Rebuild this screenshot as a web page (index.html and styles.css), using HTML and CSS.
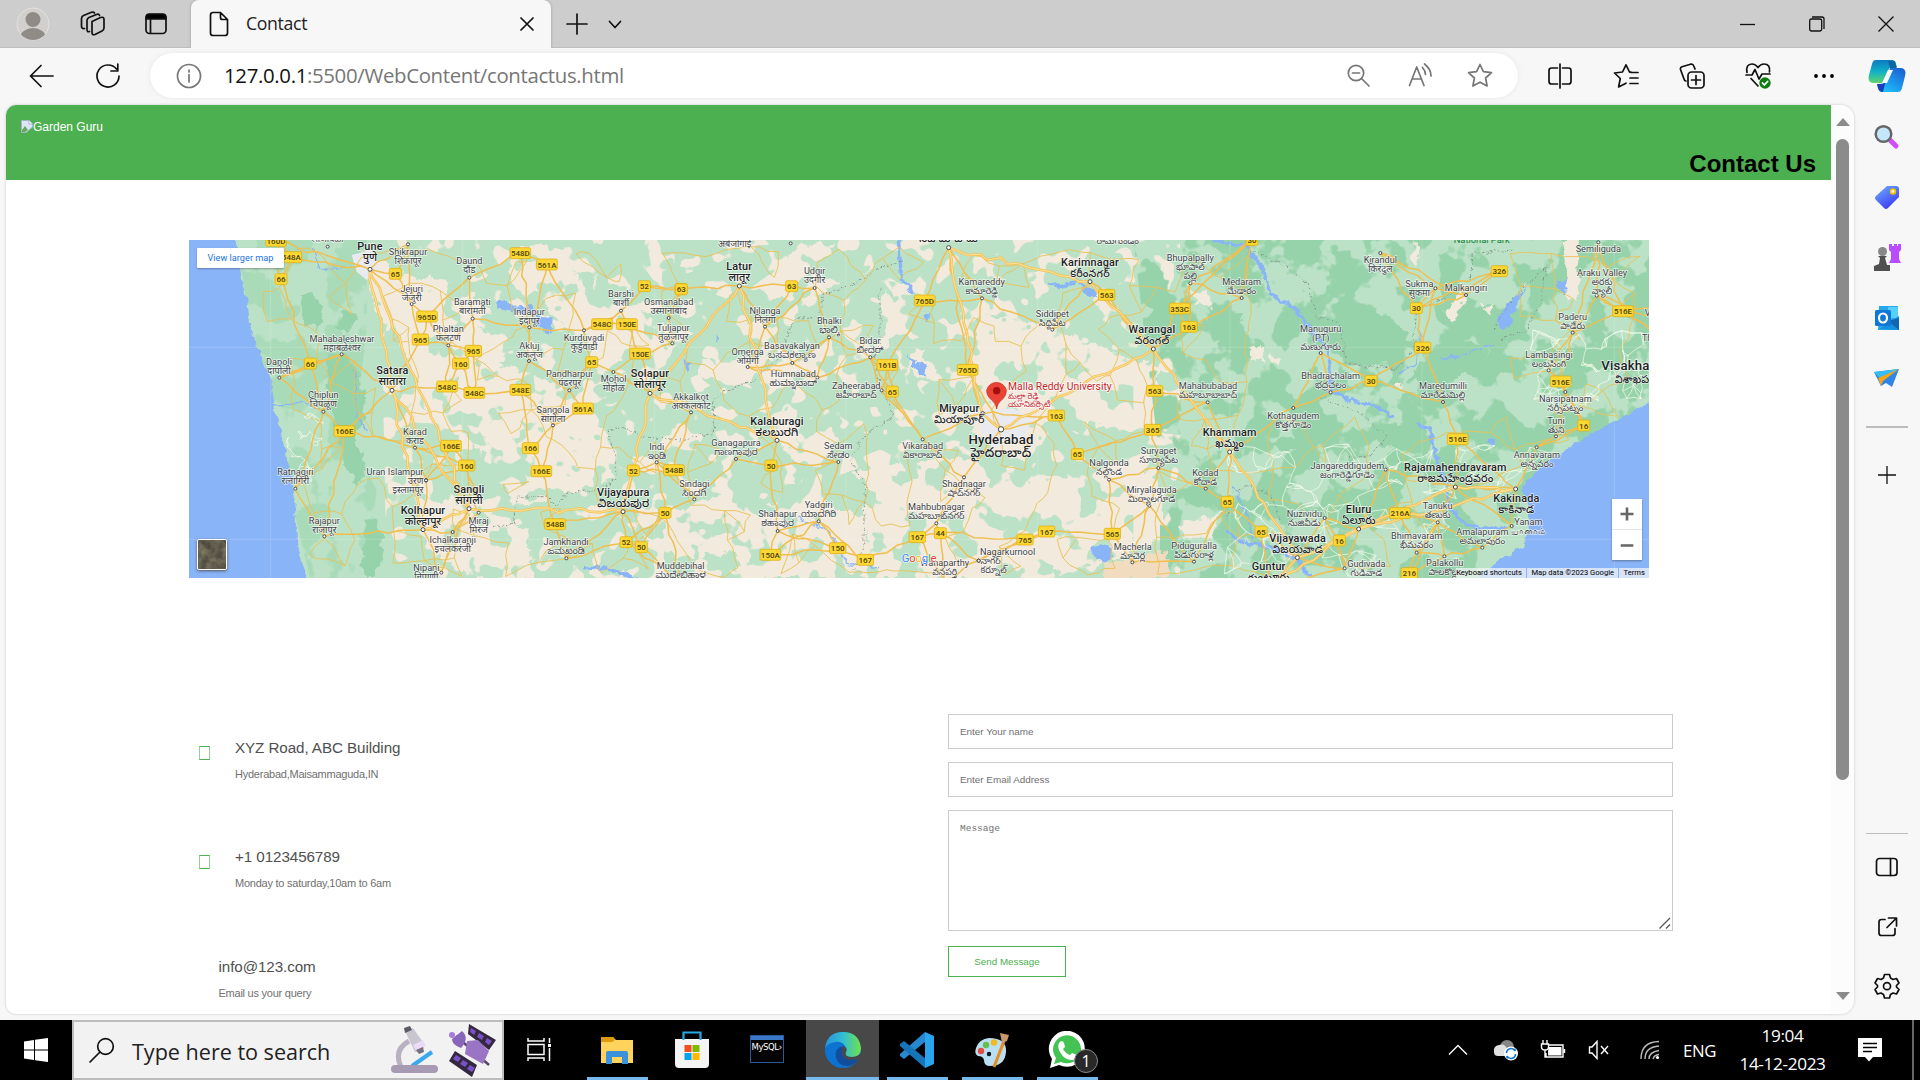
FILE: index.html
```html
<!DOCTYPE html>
<html lang="en">
<head>
<meta charset="utf-8">
<title>Contact</title>
<link rel="stylesheet" href="styles.css">
</head>
<body>
<div class="desktop">
  <div class="titlebar">
    <div class="tab-tools">
      <svg class="avatar" width="34" height="34" viewBox="0 0 34 34"><defs><clipPath id="av"><circle cx="17" cy="17" r="16"/></clipPath></defs><circle cx="17" cy="17" r="16" fill="#d2d0cd" stroke="#e4e2de"/><g clip-path="url(#av)" fill="#8f8c88"><circle cx="17" cy="12.500" r="7.500"/><ellipse cx="17" cy="31" rx="13" ry="10"/></g></svg>
      <svg class="ic workspaces" width="26" height="26" viewBox="0 0 26 26"><path d="M12 10.500 20.500 6.500Q24 5.500 24 8.500V17Q24 19 22 20L15 23.500Q12 24.500 12 21.500Z"/><path d="M9.500 20.500Q7 21.500 7 18.500V9.500Q7 7.500 9 6.500L16.500 3.500Q19 2.500 19.500 4.500M4.500 17.500Q1.500 18 1.500 15V7.500Q1.500 5.500 3.500 4.500L11.500 1.300Q13.500 .8 14.500 2"/></svg>
      <svg class="ic" width="22" height="22" viewBox="0 0 22 22"><rect x="1" y="1.500" width="20" height="19" rx="3.500"/><path d="M1 4.500Q1 1 4.500 1H17.500Q21 1 21 4.500V6H1Z" fill="#000"/><path d="M5.500 6V20"/></svg>
    </div>
    <div class="tab">
      <svg class="ic" width="20" height="26" viewBox="0 0 20 26"><path d="M4 1.500H11.500L18.500 8.500V22Q18.500 24.500 16 24.500H4Q1.500 24.500 1.500 22V4Q1.500 1.500 4 1.500ZM11.500 1.500V6.500Q11.500 8.500 13.500 8.500H18.500"/></svg>
      <span class="tab-name">Contact</span>
      <svg class="ic" width="14" height="14" viewBox="0 0 14 14"><path d="M1 1 13 13M13 1 1 13"/></svg>
    </div>
    <div class="tab-add">
      <svg class="ic" width="22" height="22" viewBox="0 0 22 22"><path d="M11 1V21M1 11H21"/></svg>
      <svg class="ic" width="14" height="9" viewBox="0 0 14 9"><path d="M1.500 1.500 7 7.500 12.500 1.500"/></svg>
    </div>
    <div class="window-buttons">
      <svg class="thin" width="16" height="16" viewBox="0 0 16 16"><path d="M0 8.500H15"/></svg>
      <svg class="thin" width="16" height="16" viewBox="0 0 16 16"><rect x=".7" y="3" width="12" height="12" rx="1.800"/><path d="M3 1H13Q15 1 15 3V13"/></svg>
      <svg class="thin" width="16" height="16" viewBox="0 0 16 16"><path d="M.5.500 15.500 15.500M15.500.500.500 15.500"/></svg>
    </div>
  </div>

  <div class="toolbar">
    <svg class="ic back" width="26" height="24" viewBox="0 0 26 24"><path d="M24 12H1.500M12 1.500 1.500 12 12 22.500"/></svg>
    <svg class="ic reload" width="26" height="26" viewBox="0 0 26 26"><path d="M24 13A11 11 0 1 1 21.500 6M22.800 1V8H16"/></svg>
    <div class="address">
      <svg class="ic gray" width="26" height="26" viewBox="0 0 26 26"><circle cx="13" cy="13" r="11.500"/><path d="M13 11.500V19M13 7V9"/></svg>
      <div class="url"><b>127.0.0.1</b>:5500/WebContent/contactus.html</div>
      <svg class="ic gray" width="23" height="23" viewBox="0 0 23 23"><circle cx="9" cy="9" r="7.700"/><path d="M14.500 14.500 22 22M5.500 9H12.500"/></svg>
      <svg class="ic gray" width="25" height="25" viewBox="0 0 25 25"><path d="M1.500 22.500 8.700 4 16 22.500M4 16H13.500M14.500 4.500Q17.500 8 17.500 11.500M16.500 1Q23 6 23 13"/></svg>
      <svg class="ic gray" width="26" height="25" viewBox="0 0 26 25"><path d="M13 1.500 16.400 8.600 24.500 9.700 18.600 15 20.100 23 13 19.200 5.900 23 7.400 15 1.500 9.700 9.600 8.600Z"/></svg>
    </div>
    <div class="toolbar-actions">
      <svg class="ic" width="26" height="26" viewBox="0 0 26 26"><path d="M10.500 5H4.500Q2 5 2 7.500V18.500Q2 21 4.500 21H10.500M15.500 5H21.500Q24 5 24 7.500V18.500Q24 21 21.500 21H15.500M13 1V25"/></svg>
      <svg class="ic" width="26" height="26" viewBox="0 0 26 26"><path d="M16.500 9 13 1.800 9.500 9 1.500 10 7.300 15.500 5.600 24 13 20.200M18 9.500H25M17 15H25M17 20.500H25M16.500 9H18"/></svg>
      <svg class="ic" width="26" height="26" viewBox="0 0 26 26"><rect x="9" y="9" width="16" height="16" rx="3.500"/><path d="M17 12.500V21.500M12.500 17H21.500M7 18Q5.500 18 5 16L1.500 6.500Q1 4.500 3 3.700L11.500 1.200Q14 .6 14.800 3L16 6"/></svg>
      <svg class="ic" width="26" height="28" viewBox="0 0 26 28"><path d="M2 10.500Q.5 2 7 2 10.500 2 13 5.500 15.500 2 19 2 25.500 2 24.500 10M1 13H7L10 7.500 14 17 17 12H25M6 16.500 13 24"/><circle cx="20" cy="21" r="5.700" fill="#107c10" stroke="none"/><path d="M17.500 21 19.300 23 22.700 19.300" stroke="#fff"/></svg>
      <svg width="26" height="26" viewBox="0 0 26 26"><circle cx="5" cy="13" r="1.900"/><circle cx="13" cy="13" r="1.900"/><circle cx="21" cy="13" r="1.900"/></svg>
    </div>
    <svg class="copilot" width="38" height="36" viewBox="0 0 38 36"><defs><linearGradient id="c1" x2="0" y2="1"><stop stop-color="#0d7ac0"/><stop offset=".5" stop-color="#11b0c8"/><stop offset="1" stop-color="#5fd56b"/></linearGradient><linearGradient id="c2" x1="1" x2=".2" y2="1"><stop stop-color="#1858d0"/><stop offset="1" stop-color="#20c4ff"/></linearGradient></defs><path d="M8 2H24Q27 2 28 6L29 9H25Q21 9 20 13L16 25H6Q-1 25 1 17L4 6Q5 2 8 2Z" fill="url(#c1)"/><path d="M30 34H14Q11 34 10 30L9 26H13Q17 26 18 22L22 10H32Q39 10 37 18L34 30Q33 34 30 34Z" fill="url(#c2)"/><path d="M9 26H13Q17 26 18 22L15 34Q11 34 10 30Z" fill="#173fc0"/><path d="M20 3 27 3Q28 9 29 10L22 10Z" fill="#0767a5"/><path d="M20 12H25L19 25H14Z" fill="#f7fbff"/></svg>
  </div>

  <div class="workarea">
    <div class="viewport">
      <div class="site">
        <header class="site-header">
          <div class="logo"><svg width="12" height="13" viewBox="0 0 12 13"><path d="M.5.500H8L11.500 4V7L5 12.500H.5Z" fill="#dbe5f7" stroke="#a9b4c4"/><path d="M8 .5V4H11.500" fill="#fff" stroke="#a9b4c4"/><path d="M1 10 4 6 7 10 4 12H1Z" fill="#66a95b"/></svg>Garden Guru</div>
          <h1>Contact Us</h1>
        </header>
        <section class="map">
          <svg class="map-canvas" viewBox="27 30 4380 1014" preserveAspectRatio="none">
            <defs>
              <filter id="rough" color-interpolation-filters="sRGB" x="-5%" y="-5%" width="110%" height="110%"><feTurbulence type="fractalNoise" baseFrequency=".03" numOctaves="3" seed="4"/><feDisplacementMap in="SourceGraphic" scale="42" xChannelSelector="R" yChannelSelector="G"/></filter>
              <filter id="ripple" color-interpolation-filters="sRGB" x="-5%" y="-5%" width="110%" height="110%"><feTurbulence type="fractalNoise" baseFrequency=".045" numOctaves="3" seed="4"/><feDisplacementMap in="SourceGraphic" scale="22" xChannelSelector="R" yChannelSelector="G"/></filter>
              <filter id="patches" color-interpolation-filters="sRGB" x="0" y="0" width="100%" height="100%"><feTurbulence type="fractalNoise" baseFrequency=".015" numOctaves="2" seed="11"/><feColorMatrix values="0 0 0 0 .949  0 0 0 0 .918  0 0 0 0 .863  30 0 0 0 -17"/><feComposite in2="SourceGraphic" operator="in"/></filter>
              <filter id="groves" color-interpolation-filters="sRGB" x="0" y="0" width="100%" height="100%"><feTurbulence type="fractalNoise" baseFrequency=".013" numOctaves="3" seed="23"/><feColorMatrix values="0 0 0 0 .733  0 0 0 0 .886  0 0 0 0 .776  0 30 0 0 -17.200"/><feComposite in2="SourceGraphic" operator="in"/></filter>
              <filter id="woods" color-interpolation-filters="sRGB" x="0" y="0" width="100%" height="100%"><feTurbulence type="fractalNoise" baseFrequency=".009" numOctaves="4" seed="7"/><feColorMatrix values="0 0 0 0 .592  0 0 0 0 .827  0 0 0 0 .667  0 0 20 0 -9.600"/><feComposite in2="SourceGraphic" operator="in"/></filter>
            </defs>
            <rect x="27" y="30" width="4380" height="1014" fill="#bbe2c6"/>
            <path d="M600 30H3000V1044H620Z" filter="url(#patches)"/>
            <g fill="#f2eadc" filter="url(#rough)">
              <path d="M590 130 820 150 930 230 900 300 1010 330 960 400 1070 440 1220 520 1290 620 1300 750 1180 790 1000 830 960 740 880 640 740 560 700 420 650 330Z"/>
              <path d="M540 60 640 110 700 240 620 300 560 150Z"/>
              <path d="M1000 60 1120 40 1180 100 1230 240 1210 330 1120 260 1070 180 980 150Z"/>
              <path d="M1200 220 1440 220 1480 330 1280 420 1180 380Z"/>
              <path d="M700 800 900 830 1040 900 1060 1044 880 1044 750 960Z"/>
              <path d="M1310 860 1500 840 1600 800 1750 850 1900 820 2060 860 2060 1044 1700 1044 1660 960 1500 990Z"/>
              <path d="M2020 720 2240 690 2400 680 2560 760 2850 690 2960 790 2940 930 2760 1000 2560 1044 2100 1044 2060 900Z"/>
              <path d="M2340 520 2400 250 2560 280 2700 330 2930 410 2960 600 2800 600 2620 540 2540 690 2400 660Z"/>
              <path d="M1870 40 1960 50 1980 160 1820 210 1720 180Z"/><path d="M1560 400 1900 380 1940 440 1760 490 1560 440Z"/><path d="M2120 180 2200 320 2300 470 2200 430 2090 280Z"/><path d="M1770 600 1900 560 2000 640 1880 730Z"/>
            </g>
            <path d="M720 30H2860V1044H800Z" filter="url(#groves)"/>
            <path d="M2860 30H4407V520L4020 820 3960 1044H2940V700Z" filter="url(#woods)"/>
            <path d="M170 30H560V300L520 640 590 780 560 1044H390L290 620 200 220Z" filter="url(#woods)" opacity=".45"/>
            <g fill="#97d3aa" filter="url(#rough)">
              <path d="M362 190 400 190 430 250 410 300 370 280Z"/><path d="M480 250 520 240 535 270 500 310 470 300Z"/>
              <path d="M440 380 500 370 540 440 555 560 520 620 560 700 530 770 490 700 470 600 440 500Z"/>
              <path d="M550 860 590 880 610 960 590 1044 550 1044Z"/>
              <path d="M3080 250 3180 250 3200 320 3120 345Z"/><path d="M3350 230 3480 270 3620 250 3690 320 3660 400 3500 410Z"/>
              <path d="M3580 590 3720 570 3760 630 3740 680 3600 650Z"/><path d="M3280 630 3360 610 3370 650 3300 665Z"/><path d="M3780 330 3930 340 3900 420 3780 470 3690 450Z"/>
            </g>
            <g fill="#f2eadc" filter="url(#rough)"><path d="M4150 30 4190 30 4195 210 4160 215Z"/><path d="M3020 165 3080 190 3095 235 3055 220Z"/><path d="M3825 190 3860 200 3815 280 3800 250Z"/><path d="M3905 230 3950 215 3930 260Z"/><path d="M3210 345 3240 340 3250 390 3220 385Z"/><path d="M3270 365 3310 380 3290 410Z"/><path d="M3000 880 3130 850 3090 920 3010 920Z"/><path d="M3700 30 3725 90 3700 120Z"/><path d="M3645 460 3670 455 3660 490Z"/></g>
            <path d="M2775 1000 2960 960 2970 1044H2770Z" fill="#f2dcc0" filter="url(#rough)"/>
            <g fill="#e8eaf0"><path d="M515 75 575 60 600 120 560 150 530 125Z"/><path d="M2410 540 2500 535 2550 560 2530 640 2440 650 2400 600Z"/><path d="M860 810 890 810 895 845 865 845Z"/></g>
            <g fill="#8ab4f8" filter="url(#ripple)">
              <path d="M0 0H162L182 130 200 200 212 290 240 370 272 440 285 540 300 600 320 680 340 760 350 860 355 950 383 1060H0Z"/>
              <path d="M4430 505 4310 570 4220 620 4140 670 4070 720 4025 770 4050 840 4045 900 4030 950 3940 1000 3890 1060H4430Z"/>
              <path d="M945 215 980 210 1000 230 1060 225 1080 260 1115 265 1110 315 1080 290 1060 255 990 245 950 235Z"/>
              <path d="M2180 375 2205 395 2240 400 2235 440 2210 430Z"/><path d="M1510 390 1535 400 1520 430Z"/>
              <path d="M2730 950 2780 940 2800 980 2770 1000 2740 980Z"/><path d="M2700 175 2740 175 2750 205Z"/><path d="M3950 270 3980 220 4040 170 4000 250 3990 290 3960 290Z"/><path d="M4130 150 4160 150 4155 195 4130 170Z"/><path d="M3920 635 3950 620 3940 650Z"/><path d="M2230 255 2250 255 2240 275Z"/><path d="M1610 315 1620 325 1610 335Z"/>
            </g>
            <g class="rivers" filter="url(#ripple)">
              <path d="M3100 30 3200 50 3250 120 3270 190 3350 240 3390 300 3440 350 3450 400 3450 480 3510 510 3590 530 3640 560"/><path d="M3710 580 3750 600 3765 660 3780 720 3800 770 3810 830 3850 880 3900 895 3985 895"/><path d="M3140 900 3180 935 3280 955 3350 985 3390 1044"/><path d="M1210 1010 1300 1020 1370 1050" /><path d="M2155 30 2165 150 2200 190"/><path d="M2600 160 2650 170 2690 150 2740 200"/>
              <path class="stream" d="M520 420 530 560 560 600M400 50 420 120 500 110M280 525 370 520 420 540M1850 860 1940 900 2000 1000 2100 1010M3660 430 3710 400 3720 300M3940 340 3860 370 3780 390M3160 770 3200 850 3220 930"/>
            </g>
            <g class="borders" filter="url(#ripple)"><path d="M940 890 1000 880 1010 800 1100 800 1130 830 1160 790 1240 780 1310 750 1300 660 1280 600 1330 590 1380 620 1500 630 1600 610 1600 510 1640 480 1720 450 1800 380 1840 270 1920 260 1930 190 2010 170 2060 140 2100 110 2160 100"/><path d="M2100 170 2100 320 2080 400 2120 520 2140 560 2060 610 2010 690 2060 770 2050 960 2020 1020"/><path d="M3210 60 3320 110 3380 160 3410 260 3480 280 3500 400 3650 420 3700 360 3710 240 3800 200 3870 150 3880 70 4000 60"/><path d="M3420 500 3540 550 3620 620 3570 680 3500 680"/><path d="M3940 300 4000 200 4100 110 4080 220 4040 300 3960 330"/><path d="M3140 870 3150 790 3200 770 3270 790 3300 870"/></g>
            <g id="lanes"></g><g id="roads"></g>
            <g class="graticule"><path d="M27 352H4407M27 928H4407M272 30V1044M847 30V1044M1423 30V1044M1998 30V1044M2573 30V1044M3150 30V1044M3726 30V1044M4303 30V1044"/></g>
            <g id="shields"></g><g id="towns"></g>
            <path d="M2450 537C2448 510 2420 510 2420 481A30 29 0 0 1 2479 481C2479 510 2452 510 2450 537Z" fill="#ea4335" stroke="#c5221f" stroke-width="2"/><circle cx="2450" cy="482" r="11" fill="#a50e0e"/>
            <g class="google"><text x="2165" y="997"><tspan fill="#4285f4">G</tspan><tspan fill="#ea4335">o</tspan><tspan fill="#fbbc05">o</tspan><tspan fill="#4285f4">g</tspan><tspan fill="#34a853">l</tspan><tspan fill="#ea4335">e</tspan></text></g>
          </svg>
          <a class="larger-map">View larger map</a>
          <div class="satellite"><svg width="28" height="29" viewBox="0 0 28 29"><defs><filter id="soil" color-interpolation-filters="sRGB"><feTurbulence type="fractalNoise" baseFrequency=".12" numOctaves="3" seed="3"/><feColorMatrix values=".35 0 0 0 .2  .33 0 0 0 .19  .25 0 0 0 .17  0 0 0 0 1"/></filter></defs><rect width="28" height="29" filter="url(#soil)"/></svg></div>
          <div class="zoom"><svg width="30" height="30" viewBox="0 0 30 30"><path d="M15 8.500V21.500M8.500 15H21.500"/></svg><svg width="30" height="31" viewBox="0 0 30 31"><path d="M8.500 16H21.500"/></svg></div>
          <div class="attribution"><span>Keyboard shortcuts</span><span>Map data ©2023 Google</span><span>Terms</span></div>
        </section>
        <section class="contact">
          <div class="details">
            <div class="detail"><i class="glyph"></i><div><h5>XYZ Road, ABC Building</h5><p>Hyderabad,Maisammaguda,IN</p></div></div>
            <div class="detail"><i class="glyph"></i><div><h5>+1 0123456789</h5><p>Monday to saturday,10am to 6am</p></div></div>
            <div class="detail detail-plain"><div><h5>info@123.com</h5><p>Email us your query</p></div></div>
          </div>
          <form class="form">
            <input type="text" placeholder="Enter Your name">
            <input type="text" placeholder="Enter Email Address">
            <div class="message"><textarea placeholder="Message"></textarea><svg width="14" height="14" viewBox="0 0 14 14"><path d="M1.500 12.500 12 2M8 12.500 12 8.500"/></svg></div>
            <button type="button">Send Message</button>
          </form>
        </section>
      </div>
      <div class="scrollbar"><i class="up"></i><i class="thumb"></i><i class="down"></i></div>
    </div>

    <aside class="sidebar">
      <svg width="28" height="28" viewBox="0 0 28 28"><defs><linearGradient id="p" x2="1" y2="1"><stop stop-color="#f060ff"/><stop offset="1" stop-color="#9030f0"/></linearGradient></defs><path d="M17.500 17.500 23 23" stroke="#d24bff" stroke-width="5" stroke-linecap="round"/><circle cx="10.500" cy="11" r="7.800" fill="#c4e6fa" stroke="#666" stroke-width="2.500"/></svg>
      <svg width="28" height="28" viewBox="0 0 28 28"><defs><linearGradient id="tg" x2=".6" y2="1"><stop stop-color="#6fb1ff"/><stop offset="1" stop-color="#3c3cf0"/></linearGradient></defs><path d="M14 3H23Q26 3 26 6V14L15 25Q13 27 11 25L3 17Q1 15 3 13Z" fill="url(#tg)"/><circle cx="20" cy="8.500" r="2.300" fill="#fff" stroke="#f5c400" stroke-width="1.800"/></svg>
      <svg width="28" height="30" viewBox="0 0 28 30"><path d="M16 2H19V4H21V2H24V4H25V2H28V8L26 10V17L28 21H16L18 17V10L16 8Z" fill="#b94cff"/><circle cx="9.500" cy="9.500" r="4.500" fill="#888"/><path d="M5 14H14L12 16 14 23H17V29H1V24L6 22 7 16Z" fill="#505050"/></svg>
      <svg width="28" height="28" viewBox="0 0 28 28"><path d="M6 2H25V26H5Z" fill="#28a8ea"/><path d="M15 3H25V14H15Z" fill="#55d0ff"/><path d="M6 25 26 12V26Z" fill="#1490df"/><path d="M15 17 26 26V14Z" fill="#1066b0"/><rect x="2" y="6" width="16" height="16" rx="1.500" fill="#0f78d4"/><ellipse cx="10" cy="14" rx="4" ry="4.500" fill="none" stroke="#fff" stroke-width="2.200"/></svg>
      <svg width="28" height="28" viewBox="0 0 28 28"><path d="M1 8 26 5 19 23 13 19 8 22Z" fill="#3184e8"/><path d="M1 8 26 5 8 15Z" fill="#39bdf5"/><path d="M5 14 26 5 10 17 8 22Z" fill="#f5a614"/></svg>
      <hr>
      <svg class="thin" width="20" height="20" viewBox="0 0 20 20"><path d="M10 1V19M1 10H19"/></svg>
      <hr class="second">
      <svg class="ic" width="24" height="24" viewBox="0 0 24 24"><rect x="1.500" y="3.500" width="20.500" height="17" rx="3"/><path d="M15.500 3.500V20.500"/></svg>
      <svg class="ic" width="22" height="22" viewBox="0 0 22 22"><path d="M9 3.500H5.500Q3 3.500 3 6V17Q3 19.500 5.500 19.500H16.500Q19 19.500 19 17V12.500M12.500 2H20.500V10M20 2.500 11 11.500"/></svg>
      <svg class="ic" width="28" height="28" viewBox="0 0 28 28"><path d="M11.500 2.500H16.500L17.500 6 20 7.500 23.500 6.500 26 11 23.500 13.500V15L26 17.500 23.500 22 20 21 17.500 22.500 16.500 26H11.500L10.500 22.500 8 21 4.500 22 2 17.500 4.500 15V13.500L2 11 4.500 6.500 8 7.500 10.500 6Z" stroke-linejoin="round"/><circle cx="14" cy="14.200" r="3.500"/></svg>
    </aside>
  </div>

  <div class="taskbar">
    <div class="start"><svg width="24" height="24" viewBox="0 0 24 24" fill="#fff"><path d="M0 3.500 10 2V11.500H0ZM11 1.800 24 0V11.500H11ZM0 12.500H10V22L0 20.500ZM11 12.500H24V24L11 22.200Z"/></svg></div>
    <div class="search">
      <svg class="ic" width="26" height="26" viewBox="0 0 26 26"><circle cx="16.500" cy="9.500" r="7.800"/><path d="M11 15 1 25"/></svg>
      <span>Type here to search</span>
      <svg class="scope" width="48" height="48" viewBox="0 0 48 48"><path d="M18 15Q2 24 10 41" fill="none" stroke="#b8b1c2" stroke-width="5"/><path d="M21 40 41 26" stroke="#39a9ee" stroke-width="4"/><path d="M14 5 22 2 34 19 31 25 24 26Z" fill="#c9c5d1"/><path d="M22 19 32 14 35 20 25 25Z" fill="#eadcf8"/><path d="M25 24 32 21 33 26 28 28Z" fill="#77707f"/><path d="M13 2 19 0 21 4 14 7Z" fill="#5c5964"/><rect x="0" y="39" width="47" height="8" rx="4" fill="#a79bb3"/></svg>
      <svg class="sat" width="48" height="54" viewBox="0 0 48 54"><path d="M7 13 40 42" stroke="#594864" stroke-width="2.500"/><path d="M20 1 47 17 40 27 19 11ZM6 28 28 42 23 54 0 38Z" fill="#33283f"/><path d="M22 5 27 8 25 12 21 9ZM30 10 35 13 33 17 28 14ZM38 15 43 18 40 22 36 19ZM7 32 12 35 9 39 4 36ZM14 37 19 40 16 44 11 41ZM21 42 26 45 23 49 18 46Z" fill="#7952c8"/><path d="M18 18 29 17 40 28 34 41 16 31Z" fill="#9a75c5"/><path d="M13 8Q21 15 12 25 3 22 3 16Z" fill="#8866ba"/><circle cx="3" cy="12" r="3" fill="#a779df"/></svg>
    </div>
    <div class="taskview"><svg width="26" height="26" viewBox="0 0 26 26" fill="none" stroke="#fff" stroke-width="1.500"><path d="M2 1V4H18V1M2 24V21H18V24M2 7.500H18V17.500H2ZM23.500 1V6M23.500 11V24"/><path d="M22 8.500H25" stroke-width="3"/></svg></div>
    <div class="apps">
      <div class="app open"><svg width="34" height="30" viewBox="0 0 34 30"><path d="M1 2H13L16 5H33V28H1Z" fill="#ffd35c"/><path d="M1 2H13L15 5 12 7H1Z" fill="#dc9a0c"/><path d="M6 28V18Q6 16 8 16H26Q28 16 28 18V29H22V22H12V29H6Z" fill="#3c92da"/></svg></div>
      <div class="app"><svg width="36" height="38" viewBox="0 0 36 38"><path d="M1 8H35V33Q35 37 31 37H5Q1 37 1 33Z" fill="#f4f4f4"/><path d="M9.500 9V1.500H26.500V9" fill="none" stroke="#27a9e6" stroke-width="2.200"/><path d="M10.500 14H17.500V21H10.500Z" fill="#f25022"/><path d="M18.500 14H25.500V21H18.500Z" fill="#7fba00"/><path d="M10.500 22H17.500V29H10.500Z" fill="#00a4ef"/><path d="M18.500 22H25.500V29H18.500Z" fill="#ffb900"/></svg></div>
      <div class="app"><div class="mysql"><b></b><span>MySQL›</span></div></div>
      <div class="app open active"><svg width="38" height="38" viewBox="0 0 38 38"><defs><linearGradient id="e1"><stop stop-color="#2792d8"/><stop offset=".5" stop-color="#32bdd6"/><stop offset="1" stop-color="#72e248"/></linearGradient></defs><circle cx="19" cy="19" r="18" fill="#0c74d0"/><path d="M1 17Q3 1 19 1 35 1 37 17 37 26 28 26 20 26 21 22 24 20 21 15 18 10 11 11 4 12 1 17Z" fill="url(#e1)"/><path d="M19 15Q10 17 12 27 15 36 25 35 32 33 35 27 23 31 19 25 17 20 19 15Z" fill="#124d9b"/><path d="M19 15Q24 16 22 21 20 26 28 26 34 26 38 21L38 31 34.500 28Q23 31 19 25 17 20 19 15Z" fill="#484848"/></svg></div>
      <div class="app open"><svg width="38" height="38" viewBox="0 0 38 38"><path d="M27 1V11L6 28 2 25V23Z" fill="#2588d0"/><path d="M2 13 6 10 28 28 27 37 2 15Z" fill="#1674b9"/><path d="M27 1 36 5V33L27 37Z" fill="#2ba4ef"/></svg></div>
      <div class="app open"><svg width="38" height="38" viewBox="0 0 38 38"><path d="M16 7Q34 7 33 21 32 35 17 35 11 35 11 29 10 25 5 25 1 23 3 17 6 8 16 7Z" fill="#b9dff2"/><circle cx="8" cy="20" r="3.200" fill="#e34d43"/><circle cx="13" cy="14" r="3.200" fill="#68be4d"/><circle cx="21" cy="11.500" r="3.200" fill="#f5b91c"/><circle cx="16" cy="23" r="2.200" fill="#101820"/><path d="M31 10 21 36" stroke="#e58d20" stroke-width="3"/><path d="M27 2 36 4 34 10 29 12Z" fill="#c89868"/></svg></div>
      <div class="app open"><svg width="38" height="38" viewBox="0 0 38 38"><path d="M2 37 4 28A18 18 0 1 1 11 34Z" fill="#fff"/><path d="M6 33 8 27A14 14 0 1 1 13 31Z" fill="#42c352"/><path d="M11 12Q14 8 16 12L17 16 15 18Q18 23 22 24L24 22 29 24Q30 28 25 29 17 30 12 21 9 16 11 12Z" fill="#fff"/></svg><span class="badge">1</span></div>
    </div>
    <div class="tray">
      <svg width="20" height="12" viewBox="0 0 20 12"><path d="M1 10.500 10 1.500 19 10.500"/></svg>
      <svg width="26" height="22" viewBox="0 0 26 22" style="stroke:none"><circle cx="14" cy="8" r="7" fill="#858585"/><path d="M1 13Q0 7 6 6 12 4 14 10L15 17H5Q1 17 1 13Z" fill="#e0e0e0"/><circle cx="18" cy="14.500" r="7" fill="#fff"/><path d="M13.500 14A4.500 4.500 0 0 1 22 12V9.500M22.500 15A4.500 4.500 0 0 1 14 17V19.500" fill="none" stroke="#1376c8" stroke-width="1.600"/></svg>
      <svg width="26" height="20" viewBox="0 0 26 20"><path d="M8 5H23V17H6V13M24.500 9V13M3 0V4M7 0V4M1.500 4H8.500V7Q8.500 10 5 10 1.500 10 1.500 7ZM5 10V17H6"/><path d="M9 7H21.500V15.500H8V11Z" fill="#fff" stroke="none"/></svg>
      <svg width="22" height="20" viewBox="0 0 22 20"><path d="M1.500 7H4L9 1.500V18.500L4 13H1.500ZM13 6 20 14M20 6 13 14"/></svg>
      <svg width="20" height="20" viewBox="0 0 20 20"><path d="M1 19Q1 2 19 1.500M5 19Q5 7 19 6M9 19Q9 12 19 10.500M13 19Q14 15 19 14.500" stroke="#bbb"/><circle cx="17.500" cy="17.500" r="1.600" fill="#fff" stroke="none"/></svg>
      <span class="lang">ENG</span>
      <div class="clock"><span>19:04</span><span>14-12-2023</span></div>
      <svg class="notes" width="26" height="26" viewBox="0 0 26 26"><path d="M1 1H25V20H16L12 24.500 8 20H1Z" fill="#fff" stroke="none"/><path d="M6 6.500H20M6 10.500H20M6 14.500H15" stroke="#000"/></svg>
      <i class="peek"></i>
    </div>
  </div>
</div>
<script src="map.js"></script>
</body>
</html>
```
FILE: styles.css
```css
* { box-sizing: border-box; }
body { margin: 0; overflow: hidden; background: #f7f7f7; font-family: "Liberation Sans", Arial, sans-serif; }
svg { display: block; flex: none; }
h1, h5, p { margin: 0; }
.ic { fill: none; stroke: #111; stroke-width: 1.7; stroke-linejoin: round; stroke-linecap: round; }
.ic.gray { stroke: #767676; }
.thin { fill: none; stroke: #111; stroke-width: 1.3; }
.desktop { width: 1920px; height: 1080px; display: flex; flex-direction: column; }

.titlebar { height: 48px; background: #cdcdcd; display: flex; align-items: stretch; box-shadow: inset 0 -1px #bdbdbd; }
.tab-tools { width: 191px; display: flex; align-items: center; padding-left: 16px; }
.workspaces { margin: 0 39px 0 30px; }
.tab { width: 360px; background: #f7f7f7; border-radius: 8px 8px 0 0; display: flex; align-items: center; padding: 0 17px 0 18px; box-shadow: 0 0 3px #999; clip-path: inset(0 -4px 0 -4px); }
.tab-name { flex: 1; margin: -2px 0 0 17px; font: 17.7px "Open Sans", sans-serif; letter-spacing: -.35px; color: #222; }
.tab-add { display: flex; align-items: center; gap: 20px; margin-left: 15px; }
.window-buttons { margin-left: auto; display: flex; align-items: center; gap: 53px; padding-right: 26px; }

.toolbar { height: 57px; display: flex; align-items: center; padding: 0 14px 2px 29px; background: #f7f7f7; }
.reload { margin: 0 29px 0 40px; }
.address { width: 1368px; height: 45px; border-radius: 23px; background: #fff; display: flex; align-items: center; padding: 0 25px 0 26px; box-shadow: 0 0 5px #e6e6e6; }
.url { flex: 1; margin: -1px 0 0 22px; font: 20.4px "Open Sans", sans-serif; letter-spacing: -.34px; color: #767676; white-space: nowrap; }
.url b { font-weight: 400; color: #111; }
.address .gray:nth-of-type(3) { margin: 0 34px 0 38px; }
.toolbar-actions { display: flex; align-items: center; gap: 40px; margin-left: 29px; }
.copilot { margin-left: auto; }

.workarea { height: 915px; display: flex; padding: 0 0 6px 6px; }
.viewport { width: 1848px; height: 909px; display: flex; border-radius: 10px 14px 14px 10px; overflow: hidden; background: #fff; box-shadow: 0 0 3px #c4c4c4; }
.site { width: 1825px; }
.site-header { height: 75px; background: #4caf50; padding: 15px 15px 0; display: flex; justify-content: space-between; }
.logo { display: flex; align-items: flex-start; font-size: 12px; line-height: 14px; color: #fff; }
h1 { font-size: 24px; line-height: 28px; margin-top: 30px; color: #000; }

.map { position: relative; width: 1460px; height: 338px; margin: 60px 0 0 183px; overflow: hidden; }
.map-canvas { width: 1460px; height: 338px; }
.map text { font-family: Roboto, "Noto Sans", "Noto Sans Devanagari", "Noto Sans Telugu", "Noto Sans Kannada", sans-serif; text-anchor: middle; }
.town { font-size: 27.5px; fill: #3f4348; stroke: #fff; stroke-width: 4px; stroke-opacity: .75; paint-order: stroke; }
.city { font-size: 32.5px; font-weight: 500; letter-spacing: .5px; fill: #202124; stroke: #fff; stroke-width: 4px; stroke-opacity: .75; paint-order: stroke; }
.metro { font-size: 39.5px; }
.place { font-size: 31px; fill: #c5221f; stroke: #fff; stroke-width: 4px; paint-order: stroke; }
.place-local { font-size: 25px; }
.park { font-size: 28px; fill: #188038; }
.dot { fill: #fff; stroke: #45494e; stroke-width: 3px; }
.shield rect { fill: #fdd835; stroke: #e0a800; stroke-width: 2px; }
.shield text { font-size: 24px; font-weight: 500; fill: #4b4212; }
.road { fill: none; stroke: #f0bf50; stroke-width: 4.5px; }
.major { stroke: #f5c35a; stroke-width: 8px; }
.major-core { stroke: #fde29a; stroke-width: 3px; }
.lane { fill: none; stroke: #fffef2; stroke-width: 2.5px; opacity: .75; }
.country { fill: none; stroke: #e8c257; stroke-width: 3px; opacity: .9; }
.rivers path { fill: none; stroke: #8ab4f8; stroke-width: 10px; stroke-linejoin: round; }
.rivers .stream { stroke-width: 4px; }
.borders path { fill: none; stroke: #85958d; stroke-width: 3px; stroke-dasharray: 6 6; }
.graticule path { fill: none; stroke: #fff; stroke-width: 1.5px; opacity: .3; }
.map .google text { text-anchor: start; font-size: 34px; letter-spacing: -.6px; stroke: #fff; stroke-width: 3px; paint-order: stroke; }
.larger-map { position: absolute; left: 8px; top: 8px; width: 87px; height: 20px; background: #fff; border-radius: 1px; box-shadow: 0 1px 2px rgba(0,0,0,.3); font: 9.2px/20px Roboto, sans-serif; color: #1a73e8; text-align: center; }
.satellite { position: absolute; left: 8px; top: 299px; width: 30px; height: 31px; border: 1px solid #fff; border-radius: 2px; overflow: hidden; box-shadow: 0 1px 3px #555; }
.zoom { position: absolute; right: 7px; top: 259px; width: 30px; height: 61px; background: #fff; box-shadow: 0 1px 2px rgba(0,0,0,.35); }
.zoom svg { fill: none; stroke: #666; stroke-width: 2.6; }
.zoom svg + svg { border-top: 1px solid #e6e6e6; }
.attribution { position: absolute; right: 0; bottom: 0; height: 10px; display: flex; gap: 1px; font: 7.6px/10px Roboto, sans-serif; color: #000; }
.attribution span { background: rgba(245,245,245,.72); padding: 0 4.2px; white-space: nowrap; }
.attribution span:first-child { padding-left: 0; }

.contact { display: flex; padding: 136px 0 0 189px; height: 436px; }
.details { width: 753px; padding-top: 24px; }
.detail { height: 109.3px; display: flex; }
.detail-plain { padding-left: 24px; margin-left: -4px; }
.detail-plain > div { margin-left: 3.5px; }
.detail h5 { font-size: 15.2px; line-height: 20px; letter-spacing: -.08px; font-weight: 400; color: #505050; margin-bottom: 8px; }
.detail p { font-size: 11px; line-height: 16px; letter-spacing: -.24px; color: #707070; }
.detail:not(.detail-plain) { padding-left: 4px; }
.glyph { width: 11px; height: 14px; border: 1px solid #4caf50; border-color: #4caf50 #8fd096; margin: 8px 25px 0 0; }
.form { width: 725px; display: flex; flex-direction: column; align-items: flex-start; }
.form input, .form textarea { width: 725px; border: 1px solid #ccc; outline: none; background: #fff; border-radius: 0; display: block; }
.form input { height: 35px; padding: 0 11px; margin-bottom: 13px; font: 9.9px "Liberation Sans", sans-serif; }
.form ::placeholder { color: #707070; opacity: 1; }
.message { position: relative; margin-bottom: 15px; }
.form textarea { height: 121px; padding: 12px 11px; resize: none; font: 9.5px/12px "Liberation Mono", monospace; }
.message svg { position: absolute; right: 1px; bottom: 1px; fill: none; stroke: #555; stroke-width: 1.3; }
.form button { width: 118px; height: 31px; padding: 0; border: 1px solid #4caf50; background: #fff; color: #4caf50; font: 9.8px "Liberation Sans", sans-serif; }

.scrollbar { width: 23px; background: #fcfcfc; display: flex; flex-direction: column; align-items: center; padding: 13px 0 14px; }
.up, .down { border: 7.5px solid transparent; }
.up { border-top: 0; border-bottom: 8px solid #8b8b8b; }
.down { border-bottom: 0; border-top: 8px solid #8b8b8b; margin-top: auto; }
.thumb { width: 13px; height: 641px; border-radius: 7px; background: #8b8b8b; margin-top: 13px; }

.sidebar { flex: 1; display: flex; flex-direction: column; align-items: center; padding: 18px 0 0; }
.sidebar svg + svg { margin-top: 32px; }
.sidebar svg:nth-of-type(3) { margin-top: 31px; }
.sidebar svg:nth-of-type(4) { margin-top: 32px; }
.sidebar hr { width: 42px; height: 2px; border: 0; background: #bdbdbd; margin: 34px 0 37px; }
.sidebar hr.second { height: 1px; margin: 348px 0 21px; }
.sidebar svg:nth-of-type(8) { margin-top: 37px; }
.sidebar svg:nth-of-type(9) { margin-top: 34px; }

.taskbar { height: 60px; background: #000; display: flex; color: #fff; font-family: "Open Sans", sans-serif; }
.start { width: 72px; display: flex; align-items: center; padding-left: 24px; }
.search { width: 432px; border: 2px solid #bdbdbd; background: #f2f2f2; display: flex; align-items: center; padding: 0 5px 0 15px; color: #222; }
.search span { flex: 1; margin: 2px 0 0 17px; font-size: 21.6px; letter-spacing: -.02px; white-space: nowrap; }
.sat { margin-left: 10px; }
.taskview { width: 75px; display: flex; align-items: center; padding-left: 22px; }
.apps { display: flex; }
.app { position: relative; width: 75px; height: 60px; display: flex; align-items: center; justify-content: center; }
.app.open::after { content: ""; position: absolute; bottom: 0; left: 8px; width: 61px; height: 3px; background: #76b9ed; }
.app.active { width: 73px; margin: 0 0 0 2px; background: #484848; }
.app.active::after { left: 0; width: 73px; }
.badge { position: absolute; left: 45px; top: 29px; width: 24px; height: 24px; border: 1px solid #888; border-radius: 50%; background: #292929; font-size: 16px; line-height: 22px; text-align: center; }
.mysql { width: 34px; height: 28px; border: 1.5px solid #2d5a9c; background: #050505; margin-top: -2px; }
.mysql b { display: block; height: 4px; background: #3a78c8; }
.mysql span { display: block; font: 8.5px/14px "DejaVu Sans", sans-serif; letter-spacing: -.4px; padding-left: 1px; }
.tray { margin-left: auto; display: flex; align-items: center; }
.tray svg { fill: none; stroke: #fff; stroke-width: 1.4; margin-right: 25px; }
.tray svg:nth-of-type(2) { margin-right: 21px; }
.tray svg:nth-of-type(3) { margin-right: 22px; }
.tray svg:nth-of-type(4) { margin-right: 30px; }
.tray svg:nth-of-type(5) { margin-right: 23px; }
.lang { width: 34px; font-size: 16.8px; letter-spacing: -.4px; }
.clock { width: 93px; margin: 0 28px 0 19px; display: flex; flex-direction: column; align-items: center; font-size: 17.2px; line-height: 28px; letter-spacing: -.35px; white-space: nowrap; }
.tray .notes { margin-right: 29px; }
.peek { width: 2px; height: 60px; background: #666; margin-right: 6px; }
```
FILE: map.js
```js
// Each sheet of the map has its own x origin; entries are [x, baseline, name, local name lines, dot x, dot y].
const SHEETS = [
  { x: 0,
    cities: [[570,60,'Pune',['पुणे'],570,118],[637,433,'Satara',['सातारा'],636,481],[867,789,'Sangli',['सांगली'],867,836],[729,851,'Kolhapur',['कोल्हापूर'],729,899],[1410,441,'Solapur',['सोलापूर'],1410,490],[1330,798,'Vijayapura',['ವಿಜಯಪುರ'],1329,845]],
    towns: [[684,74,'Shikrapur',['शिक्रापूर'],684,43],[868,102,'Daund',['दौंड'],868,143],[695,186,'Jejuri',['जेजुरी'],695,222],[877,226,'Baramati',['बारामती'],878,266],[1048,254,'Indapur',['इंदापूर'],1048,292],[805,305,'Phaltan',['फलटण'],805,346],[486,335,'Mahabaleshwar',['महाबळेश्वर'],485,373],[1048,356,'Akluj',['अकलूज'],1047,393],[1212,332,'Kurduvadi',['कुर्डुवाडी'],1212,301],[297,406,'Dapoli',['दापोली'],298,443],[1169,441,'Pandharpur',['पंढरपूर'],1168,481],[1301,455,'Mohol',['मोहोळ'],1300,426],[430,504,'Chiplun',['चिपळूण'],430,545],[1119,548,'Sangola',['सांगोला'],1119,586],[705,614,'Karad',['कराड'],705,653],[1430,660,'Indi',['ಇಂಡಿ'],1430,697],[346,736,'Ratnagiri',['रत्नागिरी'],346,776],[645,735,'Uran Islampur',[],738,751],[707,761,'',['उरण'],738,751,0],[684,761,'',['इस्लामपूर'],738,751,27],[896,881,'Miraj',['मिरज'],896,848],[433,882,'Rajapur',['राजापूर'],433,919],[818,938,'Ichalkaranji',['इचलकरंजी'],818,906],[1158,944,'Jamkhandi',['ಜಮಖಂಡಿ'],1159,985],[739,1023,'Nipani',['निपाणी'],784,1028],[1323,202,'Barshi',['बार्शी'],1323,242],[1466,224,'Osmanabad',['उस्मानाबाद'],1466,264],[1480,302,'Tuljapur',['तुळजापूर'],1477,340],[1533,510,'Akkalkot',['अक्कलकोट'],1533,547],[1502,1018,'Muddebihal',['ಮುದ್ದೇಬಿಹಾಳ'],1502,1060],[443,8,'',['लोणावळा'],443,50]],
    shields: [[288,33,'160D'],[334,82,'548A'],[303,148,66],[646,132,65],[1021,70,'548D'],[1101,104,'561A'],[1393,169,52],[741,260,'965D'],[721,329,965],[880,363,965],[842,401,160],[391,401,66],[1266,283,'548C'],[1341,283,'150E'],[1380,371,'150E'],[1235,397,65],[801,470,'548C'],[883,489,'548C'],[1021,480,'548E'],[1209,536,'561A'],[493,604,'166E'],[813,648,'166E'],[1051,655,166],[860,707,160],[1084,724,'166E'],[1360,722,52],[1482,721,'548B'],[1455,849,50],[1125,883,'548B'],[1338,937,52],[1384,952,50],[1503,178,63]] },
  { x: 1470,
    cities: [[208,119,'Latur',['लातूर'],208,168],[1260,107,'Karimnagar',['కరీంనగర్'],1260,155],[1446,308,'Warangal',['వరంగల్'],1450,357],[868,546,'Miyapur',['మియాపూర్'],938,551],[321,584,'Kalaburagi',['ಕಲಬುರಗಿ'],321,631],[836,2,'',['నిజామాబాదు'],836,53]],
    towns: [[434,133,'Udgir',['उदगीर'],434,174],[935,165,'Kamareddy',['కామారెడ్డి'],936,205],[285,251,'Nilanga',['निलंगा'],285,290],[478,281,'Bhalki',['ಭಾಲ್ಕಿ'],477,322],[600,341,'Bidar',['ಬೀದರ್'],601,382],[1147,260,'Siddipet',['సిద్దిపేట'],1147,299],[233,374,'Omerga',['ओमेर्गा'],233,411],[366,358,'Basavakalyan',['ಬಸವಕಲ್ಯಾಣ'],367,399],[370,440,'Humnabad',['ಹುಮ್ನಾಬಾದ್'],442,443],[559,476,'Zaheerabad',['జహీరాబాద్'],635,481],[198,648,'Ganagapura',['ಗಾಣಗಾಪುರ'],198,687],[505,658,'Sedam',['ಸೇಡಂ'],505,696],[758,658,'Vikarabad',['వికారాబాద్'],758,628],[1317,708,'Nalgonda',['నల్గొండ'],1317,749],[882,771,'Shadnagar',['షాద్‌నగర్'],882,742],[1445,789,'Miryalaguda',['మిర్యాలగూడ'],1438,827],[1466,673,'Suryapet',['సూర్యాపేట'],1465,714],[73,770,'Sindagi',['ಸಿಂದಗಿ'],73,808],[446,834,'Yadgiri',['ಯಾದಗಿರಿ'],446,874],[323,862,'Shahapur',['ಶಹಾಪುರ'],323,903],[799,840,'Mahbubnagar',['మహబూబ్‌నగర్'],799,880],[1013,975,'Nagarkurnool',[],926,992],[962,975,'',['నాగర్'],926,992],[971,1002,'',['కర్నూల్'],926,992],[1388,959,'Macherla',['మాచెర్ల'],1387,997],[824,1008,'Wanaparthy',['వనపర్తి'],823,1050],[194,25,'',['अंबेजोगाई'],362,40],[1343,15,'',['రామగుండం'],1343,5]],
    shields: [[34,178,63],[365,169,63],[764,212,'765D'],[1310,195,563],[652,405,'161B'],[893,420,'765D'],[667,485,65],[1159,557,163],[1454,483,563],[1448,600,365],[1222,673,65],[303,707,50],[742,922,167],[811,910,44],[1065,929,765],[1130,905,167],[1327,912,565],[503,955,150],[301,975,'150A'],[586,990,167]] },
  { x: 2940,
    cities: [[209,618,'Khammam',['ఖమ్మం'],209,666],[886,724,'Rajamahendravaram',['రాజమహేంద్రవరం'],886,771],[596,849,'Eluru',['ఏలూరు'],596,897],[1069,815,'Kakinada',['కాకినాడ'],1067,777],[413,936,'Vijayawada',['విజయవాడ'],412,983],[326,1021,'Guntur',['గుంటూరు'],330,1070]],
    towns: [[91,93,'Bhupalpally',['భూపాల్','పల్లి'],91,160],[245,166,'Medaram',['మేడారం'],245,204],[661,99,'Kirandul',['किरंदुल'],661,69],[778,170,'Sukma',['सुकमा'],826,175],[918,182,'Malkangiri',[],918,195],[1315,65,'Semiliguda',[],1315,37],[1326,137,'Araku Valley',['అరకు','వ్యాలీ'],1310,197],[482,305,'Manuguru',['(PT)','మణుగూరు'],482,369],[1238,270,'Paderu',['పాడేరు'],1238,308],[1167,383,'Lambasingi',['లంబసింగి'],1166,421],[512,448,'Bhadrachalam',['భద్రచలం'],512,487],[144,478,'Mahabubabad',['మహబూబాబాద్'],143,517],[849,477,'Maredumilli',['మారేడుమిల్లి'],849,516],[1216,515,'Narsipatnam',['నర్సీపట్నం'],1216,486],[400,566,'Kothagudem',['కొత్తగూడెం'],400,534],[1188,581,'Tuni',['తుని'],1188,619],[1131,683,'Annavaram',['అన్నవరం'],1130,652],[562,716,'Jangareddigudem',['జంగారెడ్డిగూడెం'],677,719],[136,738,'Kodad',['కోదాడ'],137,776],[833,836,'Tanuku',['తణుకు'],833,877],[433,860,'Nuzividu',['నుజివీడు'],494,864],[1105,885,'Yanam',['யானாம்'],1055,888],[967,915,'Amalapuram',['అమలాపురం'],967,953],[770,928,'Bhimavaram',['భీమవరం'],770,968],[102,957,'Piduguralla',['పిడుగురాళ్ల'],102,995],[619,1011,'Gudivada',['గుడివాడ'],554,1015],[854,1008,'Palakollu',['పాలకొల్లు'],853,979],[1463,257,'V',[],1520,257],[1462,332,'Th',[],1530,332]],
    shields: [[276,30,30],[59,236,'353C'],[87,291,163],[769,235,30],[1018,124,326],[788,353,326],[1389,244,'516E'],[633,453,30],[1202,455,'516E'],[1271,587,16],[893,628,'516E'],[202,816,65],[303,905,65],[720,850,'216A'],[538,932,16],[748,1030,216]] }
];

const NS = 'http://www.w3.org/2000/svg';
const layer = id => document.getElementById(id);
function add(parent, tag, attrs, text) {
  const el = document.createElementNS(NS, tag);
  for (const k in attrs) el.setAttribute(k, attrs[k]);
  if (text !== undefined) el.textContent = text;
  parent.appendChild(el);
  return el;
}
let seed = 71;
const rand = () => (seed = (seed * 16807) % 2147483647) / 2147483647;
const isSea = (x, y) => x < 190 + y * .2 || (y > 500 && x > 4430 - (y - 500) * 1.5 - 20) || (y > 770 && x > 4010);

// A winding line between two points.
function winding(a, b, sway) {
  const n = Math.max(2, Math.round(Math.hypot(b[0] - a[0], b[1] - a[1]) / 32));
  let d = `M${a[0]} ${a[1]}`;
  for (let i = 1; i < n; i++) {
    const t = i / n;
    d += `L${(a[0] + (b[0] - a[0]) * t + (rand() - .5) * sway).toFixed(0)} ${(a[1] + (b[1] - a[1]) * t + (rand() - .5) * sway).toFixed(0)}`;
  }
  return d + `L${b[0]} ${b[1]}`;
}

const stops = [], hubs = [[2463, 598]];
for (const s of SHEETS) {
  for (const c of s.cities) { hubs.push([c[4] + s.x, c[5]]); stops.push([c[4] + s.x, c[5]]); }
  for (const t of s.towns) if (t[2]) stops.push([t[4] + s.x, t[5]]);
  for (const h of s.shields) stops.push([h[0] + s.x, h[1]]);
}
stops.push([2463, 598]);

function network(points, count, layerId, cls, sway) {
  const seen = new Set();
  let d = '';
  points.forEach((p, i) => {
    points.map((q, j) => [Math.hypot(q[0] - p[0], q[1] - p[1]), j]).filter(e => e[1] !== i)
      .sort((a, b) => a[0] - b[0]).slice(0, count).forEach(([, j]) => {
        const key = Math.min(i, j) + '-' + Math.max(i, j);
        if (!seen.has(key)) { seen.add(key); d += winding(p, points[j], sway); }
      });
  });
  cls.forEach(c => add(layer(layerId), 'path', { d, class: c }));
}

// Country roads on a loose grid, plus denser white lanes along the eastern delta.
const rural = [];
for (let x = 200; x < 4400; x += 92) for (let y = 50; y < 1050; y += 92) {
  const p = [Math.round(x + rand() * 75), Math.round(y + rand() * 75)];
  if (!isSea(p[0], p[1]) && !(p[0] > 3220 && p[0] < 3950 && p[1] < 560)) rural.push(p);
}
network(rural, 2, 'lanes', ['country'], 15);
const delta = [];
for (let i = 0; i < 330; i++) {
  const p = [Math.round(3130 + rand() * 1250), Math.round(640 + rand() * 400)];
  if (rand() < .2) { p[0] = 4050 + Math.round(rand() * 340); p[1] = Math.round(300 + rand() * 250); }
  if (!isSea(p[0], p[1])) delta.push(p);
}
network(delta, 3, 'lanes', ['lane'], 14);
const western = [];
for (let i = 0; i < 30; i++) western.push([Math.round(310 + rand() * 130), Math.round(540 + rand() * 220)]);
network(western, 2, 'lanes', ['lane'], 14);
network(stops, 3, 'roads', ['road'], 13);
network(hubs, 2, 'roads', ['road major', 'road major-core'], 16);

for (const s of SHEETS) {
  for (const [x, y, label] of s.shields) {
    const g = add(layer('shields'), 'g', { class: 'shield' });
    const w = String(label).length * 13 + 10;
    add(g, 'rect', { x: s.x + x - w / 2, y: y - 17, width: w, height: 33, rx: 5 });
    add(g, 'text', { x: s.x + x, y: y + 9 }, label);
  }
  for (const [kind, list, step] of [['town', s.towns, 27], ['city', s.cities, 33]]) {
    for (const [x, y, name, local, dx, dy, drop] of list) {
      add(layer('towns'), 'circle', { cx: s.x + dx, cy: dy, r: kind === 'city' ? 6 : 4.500, class: 'dot' });
      if (name) add(layer('towns'), 'text', { x: s.x + x, y, class: kind }, name);
      local.forEach((line, i) => add(layer('towns'), 'text', { x: s.x + x, y: y + (drop === undefined ? step * (i + 1) : drop), class: kind }, line));
    }
  }
}
const t = layer('towns');
add(t, 'circle', { cx: 2463, cy: 598, r: 8, class: 'dot' });
add(t, 'text', { x: 2463, y: 643, class: 'city metro' }, 'Hyderabad');
add(t, 'text', { x: 2463, y: 682, class: 'city metro' }, 'హైదరాబాద్');
add(t, 'text', { x: 4264, y: 421, class: 'city metro', style: 'text-anchor:start' }, 'Visakhapatnam');
add(t, 'text', { x: 4304, y: 460, class: 'city', style: 'text-anchor:start' }, 'విశాఖపట్నం');
add(t, 'text', { x: 3905, y: 40, class: 'park' }, 'National Park');
add(t, 'text', { x: 2484, y: 479, class: 'place', style: 'text-anchor:start' }, 'Malla Reddy University');
add(t, 'text', { x: 2484, y: 506, class: 'place place-local', style: 'text-anchor:start' }, 'మల్లా రెడ్డి');
add(t, 'text', { x: 2484, y: 531, class: 'place place-local', style: 'text-anchor:start' }, 'యూనివర్సిటీ');
```
